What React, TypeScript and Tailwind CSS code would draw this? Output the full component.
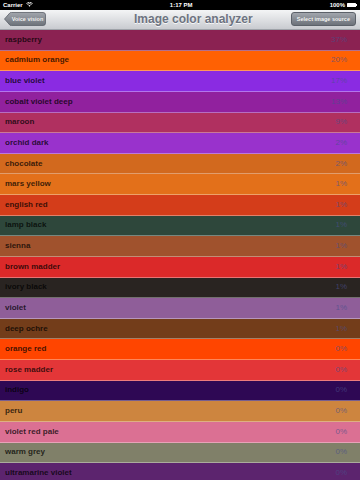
import React from 'react';

interface Swatch {
  name: string;
  color: string;
  pct: string;
}

const swatches: Swatch[] = [
  { name: 'raspberry', color: '#8b2252', pct: '37%' },
  { name: 'cadmium orange', color: '#ff6103', pct: '20%' },
  { name: 'blue violet', color: '#8a2be2', pct: '17%' },
  { name: 'cobalt violet deep', color: '#91219e', pct: '13%' },
  { name: 'maroon', color: '#b03060', pct: '9%' },
  { name: 'orchid dark', color: '#9932cc', pct: '2%' },
  { name: 'chocolate', color: '#d2691e', pct: '2%' },
  { name: 'mars yellow', color: '#e3701a', pct: '1%' },
  { name: 'english red', color: '#d43d1a', pct: '1%' },
  { name: 'lamp black', color: '#2e473b', pct: '1%' },
  { name: 'sienna', color: '#a0522d', pct: '1%' },
  { name: 'brown madder', color: '#db2929', pct: '1%' },
  { name: 'ivory black', color: '#292421', pct: '1%' },
  { name: 'violet', color: '#8f5e99', pct: '1%' },
  { name: 'deep ochre', color: '#733d1a', pct: '1%' },
  { name: 'orange red', color: '#ff4500', pct: '0%' },
  { name: 'rose madder', color: '#e33638', pct: '0%' },
  { name: 'indigo', color: '#2e0854', pct: '0%' },
  { name: 'peru', color: '#cd853f', pct: '0%' },
  { name: 'violet red pale', color: '#db7093', pct: '0%' },
  { name: 'warm grey', color: '#808069', pct: '0%' },
  { name: 'ultramarine violet', color: '#5c246e', pct: '0%' },
];

const StatusBar = () => (
  <div className="h-[9.5px] bg-black text-white flex items-center justify-between px-[3px] text-[6px] font-bold leading-none">
    <div className="flex items-center gap-[3px]">
      <span>Carrier</span>
      {/* wifi */}
      <svg width="7" height="5" viewBox="0 0 14 10">
        <path d="M7 9.5 L4.8 7 A3.2 3.2 0 0 1 9.2 7 Z" fill="white" />
        <path d="M2.8 5 A6 6 0 0 1 11.2 5" stroke="white" strokeWidth="1.6" fill="none" />
        <path d="M0.8 3 A9 9 0 0 1 13.2 3" stroke="white" strokeWidth="1.6" fill="none" />
      </svg>
    </div>
    <span className="font-bold">1:17 PM</span>
    <div className="flex items-center gap-[2px]">
      <span>100%</span>
      <div className="flex items-center">
        <div className="w-[9px] h-[4.5px] bg-white rounded-[0.5px]" />
        <div className="w-[1px] h-[2px] bg-white" />
      </div>
    </div>
  </div>
);

const NavBar = () => (
  <div className="h-[20.5px] flex items-center px-[4px] bg-gradient-to-b from-[#f4f5f6] to-[#c9cbd0] border-b border-[#9ea2a8]">
    {/* back button */}
    <div className="relative w-[42px] h-[14px] shrink-0">
      <svg className="absolute inset-0" width="42" height="14" viewBox="0 0 42 14">
        <defs>
          <linearGradient id="bb" x1="0" y1="0" x2="0" y2="1">
            <stop offset="0" stopColor="#a2a6ad" />
            <stop offset="1" stopColor="#6d727a" />
          </linearGradient>
        </defs>
        <path d="M0.5 7 L6 0.8 Q6.5 0.5 7.5 0.5 L39 0.5 Q41.5 0.5 41.5 3 L41.5 11 Q41.5 13.5 39 13.5 L7.5 13.5 Q6.5 13.5 6 13.2 Z" fill="url(#bb)" stroke="#5c6169" strokeWidth="0.8" />
      </svg>
      <span className="relative flex items-center justify-center h-full pl-[5px] text-white text-[5.5px] font-bold [text-shadow:0_-0.5px_0_rgba(0,0,0,0.4)]">
        Voice vision
      </span>
    </div>
    <span className="ml-[88px] text-[12px] font-bold text-[#6d7380] [text-shadow:0_1px_0_rgba(255,255,255,0.8)]">
      Image color analyzer
    </span>
    <div className="ml-auto h-[14px] px-[5px] flex items-center rounded-[3px] border border-[#5c6169] bg-gradient-to-b from-[#a2a6ad] to-[#6d727a] text-white text-[5.5px] font-bold [text-shadow:0_-0.5px_0_rgba(0,0,0,0.4)]">
      Select image source
    </div>
  </div>
);

export default function App() {
  return (
    <div className="w-[360px] h-[480px] overflow-hidden bg-white font-['Liberation_Sans',Arial,sans-serif]">
      <StatusBar />
      <NavBar />
      <div className="flex flex-col">
        {swatches.map((s) => (
          <div
            key={s.name}
            className="h-[20.625px] shrink-0 flex items-center justify-between pl-[5px] pr-[13px] border-b border-white/35"
            style={{ backgroundColor: s.color }}
          >
            <span className="text-[8px] font-bold text-black/75">{s.name}</span>
            <span className="text-[8px] text-[#4a4e8a]/70">{s.pct}</span>
          </div>
        ))}
      </div>
    </div>
  );
}
